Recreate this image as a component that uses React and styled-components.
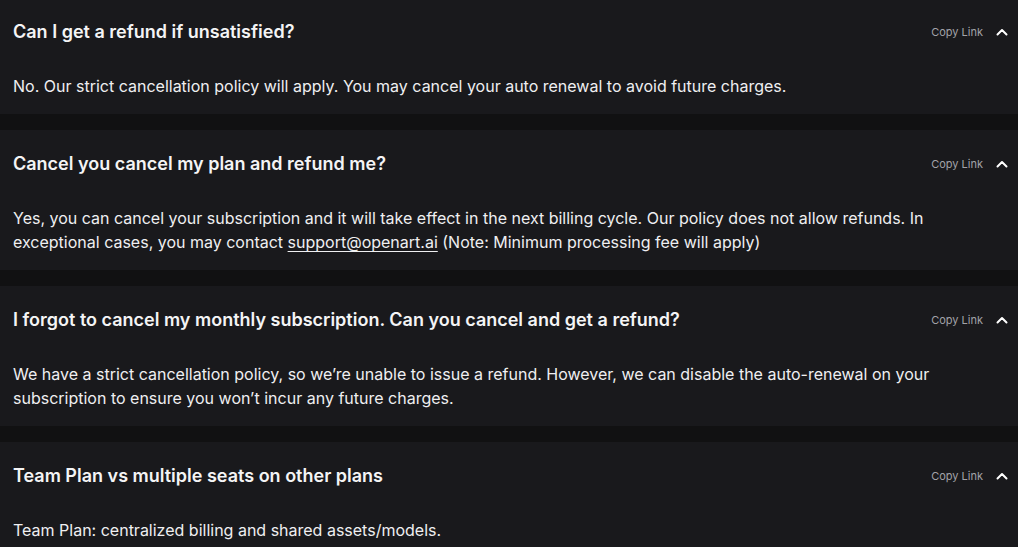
import React from "react";
import styled, { createGlobalStyle } from "styled-components";

const Global = createGlobalStyle`
  html, body { margin: 0; padding: 0; background: #111112; }
  body { font-family: Inter, "Noto Sans", sans-serif; overflow: hidden; }
`;

const List = styled.div`
  display: flex;
  flex-direction: column;
  gap: 16px;
  margin-top: -2px;
`;

const Card = styled.section`
  background: #19191c;
  padding: 21px 10px 16px 13px;
  display: flex;
  flex-direction: column;
  gap: 29px;
`;

const Header = styled.div`
  display: flex;
  align-items: center;
  justify-content: space-between;
  height: 26px;
`;

const Title = styled.h3`
  margin: 0;
  font-size: 18px;
  line-height: 26px;
  font-weight: 600;
  color: #f4f4f5;
`;

const Actions = styled.div`
  display: flex;
  align-items: center;
  gap: 13px;
`;

const CopyLink = styled.button`
  background: none;
  border: none;
  padding: 0;
  font-family: inherit;
  font-size: 11px;
  color: #a2a2a8;
  cursor: pointer;
`;

const Chevron = styled.svg`
  width: 12px;
  height: 12px;
  display: block;
`;

const Answer = styled.p`
  margin: 0;
  font-size: 16px;
  line-height: 24px;
  color: #efeff1;
  max-width: 930px;
`;

const Mail = styled.a`
  color: inherit;
  text-decoration: underline;
  text-underline-offset: 3px;
  text-decoration-thickness: 1px;
`;

const faqs = [
  {
    q: "Can I get a refund if unsatisfied?",
    a: "No. Our strict cancellation policy will apply. You may cancel your auto renewal to avoid future charges.",
  },
  {
    q: "Cancel you cancel my plan and refund me?",
    a: (
      <>
        Yes, you can cancel your subscription and it will take effect in the next billing cycle. Our policy does not allow refunds. In exceptional cases, you may contact{" "}
        <Mail href="#">support@openart.ai</Mail> (Note: Minimum processing fee will apply)
      </>
    ),
  },
  {
    q: "I forgot to cancel my monthly subscription. Can you cancel and get a refund?",
    a: "We have a strict cancellation policy, so we’re unable to issue a refund. However, we can disable the auto-renewal on your subscription to ensure you won’t incur any future charges.",
  },
  {
    q: "Team Plan vs multiple seats on other plans",
    a: "Team Plan: centralized billing and shared assets/models.",
  },
];

export default function App() {
  return (
    <>
      <Global />
      <List>
        {faqs.map((f, i) => (
          <Card key={i}>
            <Header>
              <Title>{f.q}</Title>
              <Actions>
                <CopyLink>Copy Link</CopyLink>
                <Chevron viewBox="0 0 12 12" fill="none">
                  <path d="M1.5 8.5 L6 4 L10.5 8.5" stroke="#fff" strokeWidth="2" strokeLinecap="round" strokeLinejoin="round" />
                </Chevron>
              </Actions>
            </Header>
            <Answer>{f.a}</Answer>
          </Card>
        ))}
      </List>
    </>
  );
}
